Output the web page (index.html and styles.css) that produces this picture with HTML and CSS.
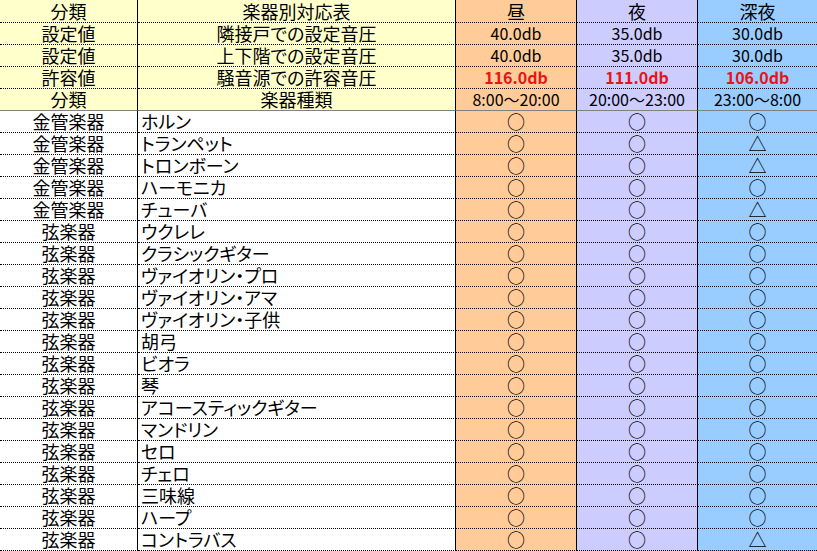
FILE: index.html
```html
<!DOCTYPE html>
<html lang="ja">
<head>
<meta charset="utf-8">
<title>楽器別対応表</title>
<link rel="stylesheet" href="styles.css">
</head>
<body>
<table class="sheet">
  <colgroup>
    <col class="c-cat"><col class="c-name"><col class="c-day"><col class="c-eve"><col class="c-night">
  </colgroup>
  <tbody>
    <tr class="hd first">
      <td class="y">分類</td><td class="y">楽器別対応表</td><td class="day">昼</td><td class="eve">夜</td><td class="night">深夜</td>
    </tr>
    <tr class="hd">
      <td class="y">設定値</td><td class="y">隣接戸での設定音圧</td><td class="day num">40.0db</td><td class="eve num">35.0db</td><td class="night num">30.0db</td>
    </tr>
    <tr class="hd">
      <td class="y">設定値</td><td class="y">上下階での設定音圧</td><td class="day num">40.0db</td><td class="eve num">35.0db</td><td class="night num">30.0db</td>
    </tr>
    <tr class="hd">
      <td class="y">許容値</td><td class="y">騒音源での許容音圧</td><td class="day red">116.0db</td><td class="eve red">111.0db</td><td class="night red">106.0db</td>
    </tr>
    <tr class="hd last">
      <td class="y">分類</td><td class="y">楽器種類</td><td class="day num">8:00～20:00</td><td class="eve num">20:00～23:00</td><td class="night num">23:00～8:00</td>
    </tr>
    <tr><td>金管楽器</td><td class="name">ホルン</td><td class="day">○</td><td class="eve">○</td><td class="night">○</td></tr>
    <tr><td>金管楽器</td><td class="name">トランペット</td><td class="day">○</td><td class="eve">○</td><td class="night">△</td></tr>
    <tr><td>金管楽器</td><td class="name">トロンボーン</td><td class="day">○</td><td class="eve">○</td><td class="night">△</td></tr>
    <tr><td>金管楽器</td><td class="name">ハーモニカ</td><td class="day">○</td><td class="eve">○</td><td class="night">○</td></tr>
    <tr><td>金管楽器</td><td class="name">チューバ</td><td class="day">○</td><td class="eve">○</td><td class="night">△</td></tr>
    <tr><td>弦楽器</td><td class="name">ウクレレ</td><td class="day">○</td><td class="eve">○</td><td class="night">○</td></tr>
    <tr><td>弦楽器</td><td class="name">クラシックギター</td><td class="day">○</td><td class="eve">○</td><td class="night">○</td></tr>
    <tr><td>弦楽器</td><td class="name">ヴァイオリン・プロ</td><td class="day">○</td><td class="eve">○</td><td class="night">○</td></tr>
    <tr><td>弦楽器</td><td class="name">ヴァイオリン・アマ</td><td class="day">○</td><td class="eve">○</td><td class="night">○</td></tr>
    <tr><td>弦楽器</td><td class="name">ヴァイオリン・子供</td><td class="day">○</td><td class="eve">○</td><td class="night">○</td></tr>
    <tr><td>弦楽器</td><td class="name">胡弓</td><td class="day">○</td><td class="eve">○</td><td class="night">○</td></tr>
    <tr><td>弦楽器</td><td class="name">ビオラ</td><td class="day">○</td><td class="eve">○</td><td class="night">○</td></tr>
    <tr><td>弦楽器</td><td class="name">琴</td><td class="day">○</td><td class="eve">○</td><td class="night">○</td></tr>
    <tr><td>弦楽器</td><td class="name">アコースティックギター</td><td class="day">○</td><td class="eve">○</td><td class="night">○</td></tr>
    <tr><td>弦楽器</td><td class="name">マンドリン</td><td class="day">○</td><td class="eve">○</td><td class="night">○</td></tr>
    <tr><td>弦楽器</td><td class="name">セロ</td><td class="day">○</td><td class="eve">○</td><td class="night">○</td></tr>
    <tr><td>弦楽器</td><td class="name">チェロ</td><td class="day">○</td><td class="eve">○</td><td class="night">○</td></tr>
    <tr><td>弦楽器</td><td class="name">三味線</td><td class="day">○</td><td class="eve">○</td><td class="night">○</td></tr>
    <tr><td>弦楽器</td><td class="name">ハープ</td><td class="day">○</td><td class="eve">○</td><td class="night">○</td></tr>
    <tr><td>弦楽器</td><td class="name">コントラバス</td><td class="day">○</td><td class="eve">○</td><td class="night">△</td></tr>
  </tbody>
</table>
</body>
</html>
```

FILE: styles.css
```css
html, body {
  margin: 0;
  padding: 0;
  background: #ffffff;
}

.sheet {
  border-collapse: separate;
  border-spacing: 0;
  table-layout: fixed;
  width: 817px;
  font-family: "Noto Sans CJK JP", "Noto Sans", sans-serif;
  font-size: 18px;
  font-feature-settings: "palt" 1;
  color: #000000;
}

.c-cat { width: 138px; }
.c-name { width: 318px; }
.c-day { width: 121px; }
.c-eve { width: 121px; }
.c-night { width: 119px; }

.sheet td {
  box-sizing: border-box;
  height: 22px;
  padding: 0;
  line-height: 21px;
  text-align: center;
  white-space: nowrap;
  border-bottom: 1px dotted #000000;
  border-right: 1px solid #000000;
}

.sheet td:last-child {
  border-right: none;
}

.sheet tr.first td {
  height: 23px;
  line-height: 22px;
}

.sheet tr.last td {
  border-bottom: 1px solid #808080;
}

.sheet td.y { background: #ffffcc; }
.sheet td.day { background: #ffcc99; }
.sheet td.eve { background: #ccccff; }
.sheet td.night { background: #99ccff; }

.sheet td.name {
  text-align: left;
  padding-left: 3px;
}

.sheet td.num {
  font-size: 16px;
  font-feature-settings: normal;
}

.sheet td.red {
  font-size: 16px;
  font-weight: bold;
  color: #e51616;
  font-feature-settings: normal;
}
```
